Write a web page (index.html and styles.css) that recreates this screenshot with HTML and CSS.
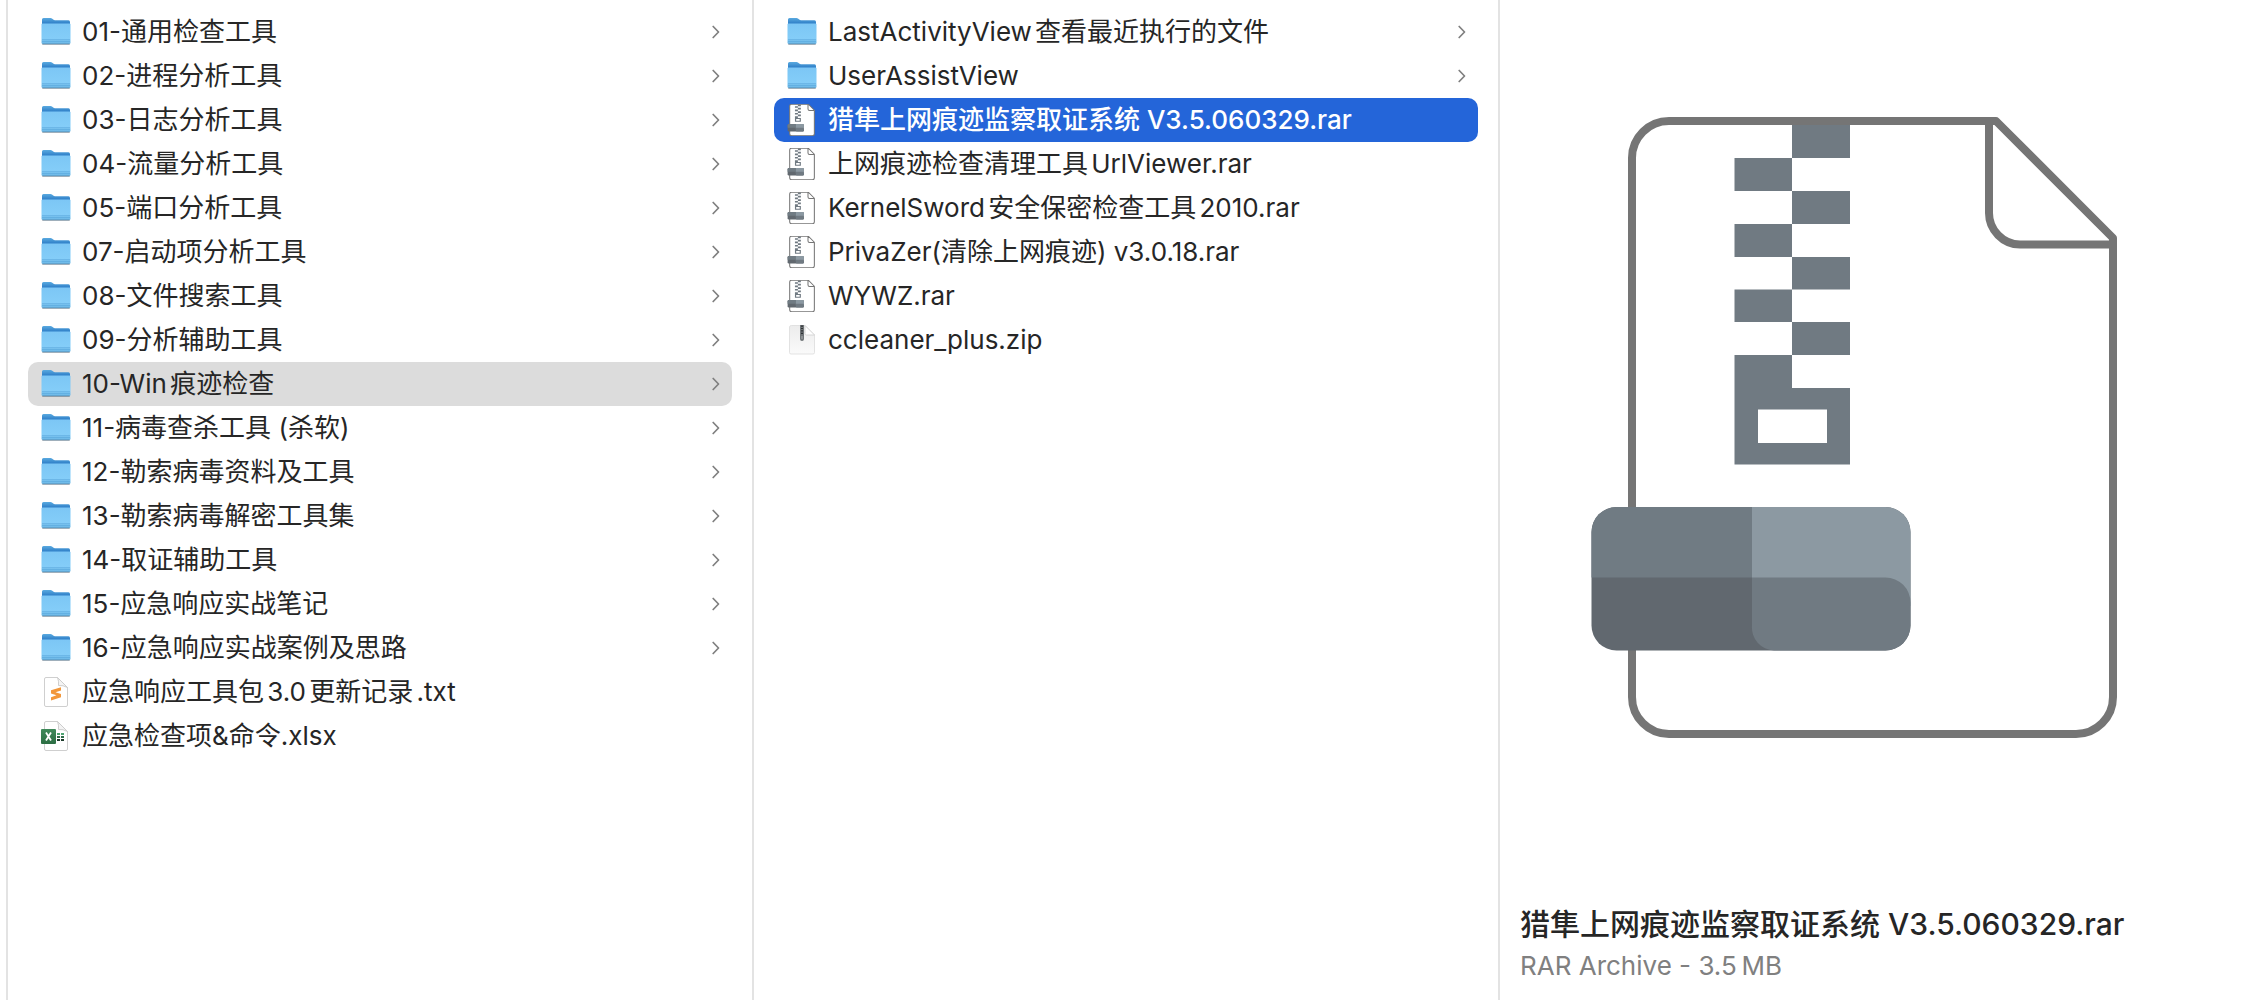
FILE: index.html
```html
<!DOCTYPE html>
<html lang="zh-CN">
<head>
  <meta charset="UTF-8">
  <title>应急响应工具包</title>
  <link rel="stylesheet" href="styles.css">
</head>
<body>

  <svg class="sprite" aria-hidden="true">
    <defs>
      <linearGradient id="folderBack" x1="0" y1="0" x2="0" y2="1">
        <stop offset="0" stop-color="#5aaae0"/>
        <stop offset="0.3" stop-color="#2f7fc8"/>
      </linearGradient>
      <linearGradient id="folderFront" x1="0" y1="0" x2="0" y2="1">
        <stop offset="0" stop-color="#7cc6f5"/>
        <stop offset="0.75" stop-color="#84cdf8"/>
        <stop offset="1" stop-color="#68b4e4"/>
      </linearGradient>
      <linearGradient id="zipPaper" x1="0" y1="0" x2="0" y2="1">
        <stop offset="0" stop-color="#ececec"/>
        <stop offset="1" stop-color="#fafafa"/>
      </linearGradient>
      <linearGradient id="excelGreen" x1="0" y1="0" x2="0" y2="1">
        <stop offset="0" stop-color="#3f8a5a"/>
        <stop offset="1" stop-color="#2c6e43"/>
      </linearGradient>
    </defs>

    <symbol id="folder" viewBox="0 0 32 32">
      <rect x="2" y="27" width="28" height="2" rx="1" fill="#000" opacity="0.25"/>
      <path d="M2 3.500Q2 2 3.500 2H10.500Q11.500 2 12.300 2.700L13.200 3.600Q14 4.300 15 4.300H28.500Q30 4.300 30 6V20H2Z" fill="url(#folderBack)"/>
      <path d="M1.500 8.500Q1.500 7.500 2.500 7.500H29.500Q30.500 7.500 30.500 8.500V26.500Q30.500 28 29 28H3Q1.500 28 1.500 26.500Z" fill="url(#folderFront)"/>
      <path d="M2 23.700H30M2 25.500H30" stroke="#5ca9dc" stroke-width="0.700"/>
      <path d="M2.500 27.900H29.500" stroke="#5a8fb5" stroke-width="0.800"/>
    </symbol>

    <symbol id="chevron" viewBox="0 0 8 14">
      <path d="M1.200 1.500L6.500 7L1.200 12.500" fill="none" stroke="#7f7f7f" stroke-width="1.700" stroke-linecap="round" stroke-linejoin="round"/>
    </symbol>

    <symbol id="rar" viewBox="0 0 624 624">
      <path d="M109 5H436L553 122V581Q553 618 516 618H109Q72 618 72 581V42Q72 5 109 5Z" fill="#fff"/>
      <path fill="#707a82" fill-rule="evenodd" d="M232 8H290V42H232ZM174.500 42H232V75H174.500ZM232 75H290V108H232ZM174.500 108H232V141H174.500ZM232 141H290V173.500H232ZM174.500 173.500H232V206H174.500ZM232 206H290V239H232ZM174.500 239H232V272H290V348.500H174.500ZM198 293.500V327H267V293.500Z"/>
      <path class="paper-edge" fill="none" stroke="#757575" stroke-linejoin="round" d="M109 5H436L553 122V581A37 37 0 0 1 516 618H109A37 37 0 0 1 72 581V42A37 37 0 0 1 109 5ZM429 5V97C429 114 443 128.500 460 128.500H553"/>
      <rect x="31.500" y="391" width="319" height="143.500" rx="25" fill="#61686f"/>
      <path d="M56.500 391H192V461.500H31.500V416A25 25 0 0 1 56.500 391Z" fill="#707b83"/>
      <path d="M192 391H325.500A25 25 0 0 1 350.500 416V490H192Z" fill="#8c99a2"/>
      <path d="M192 461.500H325.500A25 25 0 0 1 350.500 486.500V509.500A25 25 0 0 1 325.500 534.500H214A23 23 0 0 1 192 509.500Z" fill="#707a82"/>
    </symbol>

    <symbol id="zip" viewBox="0 0 32 32">
      <path d="M5.500 1.500H19L28.500 11V28.500Q28.500 30 27 30H5Q3.500 30 3.500 28.500V3Q3.500 1.500 5.500 1.500Z" fill="url(#zipPaper)" stroke="#dcdcdc" stroke-width="0.800"/>
      <path d="M19 1.500V9.500Q19 11 20.500 11H28.500Z" fill="#fff" stroke="#cfcfcf" stroke-width="0.800"/>
      <path d="M14 1H18V15Q18 17 16 17Q14 17 14 15Z" fill="#707578"/>
      <path d="M16 1.500V11" stroke="#2f3336" stroke-width="2" stroke-dasharray="1.200 1.200"/>
      <path d="M16 12V15" stroke="#a9adaf" stroke-width="1"/>
    </symbol>

    <symbol id="sublime" viewBox="0 0 32 32">
      <path d="M6 1.500H17.500L27.500 11.500V29Q27.500 30.500 26 30.500H6Q4.500 30.500 4.500 29V3Q4.500 1.500 6 1.500Z" fill="#fff" stroke="#c9c9c9" stroke-width="0.900"/>
      <path d="M17.500 1.500Q19 5 18.500 9.500Q23 9 27.500 11.500Z" fill="#f4f4f4" stroke="#c9c9c9" stroke-width="0.900"/>
      <path d="M11 14.300L21 11.300V14.500L15.500 16.300L21 18V21.300L11 24.500V21.200L16.500 19.300L11 17.600Z" fill="#f2973a"/>
    </symbol>

    <symbol id="excel" viewBox="0 0 32 32">
      <path d="M6 1.500H17.500L27.500 11.500V29Q27.500 30.500 26 30.500H6Q4.500 30.500 4.500 29V3Q4.500 1.500 6 1.500Z" fill="#fff" stroke="#c9c9c9" stroke-width="0.900"/>
      <path d="M17.500 1.500Q19 5 18.500 9.500Q23 9 27.500 11.500Z" fill="#f4f4f4" stroke="#c9c9c9" stroke-width="0.900"/>
      <path d="M17 13H20V15H17ZM21 13H24V15H21Z" fill="#4fa471"/>
      <path d="M17 16H20V18H17ZM21 16H24V18H21Z" fill="#2f6b48"/>
      <path d="M17 19H20V21H17ZM21 19H24V21H21Z" fill="#1d3b2b"/>
      <rect x="1" y="9" width="15" height="15" rx="1" fill="url(#excelGreen)"/>
      <path d="M6 12.500L11 20.500M11 12.500L6 20.500" stroke="#fff" stroke-width="1.800"/>
    </symbol>
  </svg>

  <main class="browser">

    <nav class="column" aria-label="应急响应工具包">
      <ul class="list">
        <li><a class="row" href="#"><svg class="icon"><use href="#folder"/></svg><span class="name">01-通用检查工具</span><svg class="chevron"><use href="#chevron"/></svg></a></li>
        <li><a class="row" href="#"><svg class="icon"><use href="#folder"/></svg><span class="name">02-进程分析工具</span><svg class="chevron"><use href="#chevron"/></svg></a></li>
        <li><a class="row" href="#"><svg class="icon"><use href="#folder"/></svg><span class="name">03-日志分析工具</span><svg class="chevron"><use href="#chevron"/></svg></a></li>
        <li><a class="row" href="#"><svg class="icon"><use href="#folder"/></svg><span class="name">04-流量分析工具</span><svg class="chevron"><use href="#chevron"/></svg></a></li>
        <li><a class="row" href="#"><svg class="icon"><use href="#folder"/></svg><span class="name">05-端口分析工具</span><svg class="chevron"><use href="#chevron"/></svg></a></li>
        <li><a class="row" href="#"><svg class="icon"><use href="#folder"/></svg><span class="name">07-启动项分析工具</span><svg class="chevron"><use href="#chevron"/></svg></a></li>
        <li><a class="row" href="#"><svg class="icon"><use href="#folder"/></svg><span class="name">08-文件搜索工具</span><svg class="chevron"><use href="#chevron"/></svg></a></li>
        <li><a class="row" href="#"><svg class="icon"><use href="#folder"/></svg><span class="name">09-分析辅助工具</span><svg class="chevron"><use href="#chevron"/></svg></a></li>
        <li><a class="row open" href="#"><svg class="icon"><use href="#folder"/></svg><span class="name">10-Win痕迹检查</span><svg class="chevron"><use href="#chevron"/></svg></a></li>
        <li><a class="row" href="#"><svg class="icon"><use href="#folder"/></svg><span class="name">11-病毒查杀工具 (杀软)</span><svg class="chevron"><use href="#chevron"/></svg></a></li>
        <li><a class="row" href="#"><svg class="icon"><use href="#folder"/></svg><span class="name">12-勒索病毒资料及工具</span><svg class="chevron"><use href="#chevron"/></svg></a></li>
        <li><a class="row" href="#"><svg class="icon"><use href="#folder"/></svg><span class="name">13-勒索病毒解密工具集</span><svg class="chevron"><use href="#chevron"/></svg></a></li>
        <li><a class="row" href="#"><svg class="icon"><use href="#folder"/></svg><span class="name">14-取证辅助工具</span><svg class="chevron"><use href="#chevron"/></svg></a></li>
        <li><a class="row" href="#"><svg class="icon"><use href="#folder"/></svg><span class="name">15-应急响应实战笔记</span><svg class="chevron"><use href="#chevron"/></svg></a></li>
        <li><a class="row" href="#"><svg class="icon"><use href="#folder"/></svg><span class="name">16-应急响应实战案例及思路</span><svg class="chevron"><use href="#chevron"/></svg></a></li>
        <li><a class="row" href="#"><svg class="icon"><use href="#sublime"/></svg><span class="name">应急响应工具包3.0更新记录.txt</span></a></li>
        <li><a class="row" href="#"><svg class="icon"><use href="#excel"/></svg><span class="name tight">应急检查项&amp;命令.xlsx</span></a></li>
      </ul>
    </nav>

    <nav class="column" aria-label="10-Win痕迹检查">
      <ul class="list">
        <li><a class="row" href="#"><svg class="icon"><use href="#folder"/></svg><span class="name">LastActivityView查看最近执行的文件</span><svg class="chevron"><use href="#chevron"/></svg></a></li>
        <li><a class="row" href="#"><svg class="icon"><use href="#folder"/></svg><span class="name">UserAssistView</span><svg class="chevron"><use href="#chevron"/></svg></a></li>
        <li><a class="row selected" href="#" aria-current="true"><svg class="icon"><use href="#rar"/></svg><span class="name">猎隼上网痕迹监察取证系统 V3.5.060329.rar</span></a></li>
        <li><a class="row" href="#"><svg class="icon"><use href="#rar"/></svg><span class="name">上网痕迹检查清理工具UrlViewer.rar</span></a></li>
        <li><a class="row" href="#"><svg class="icon"><use href="#rar"/></svg><span class="name">KernelSword安全保密检查工具2010.rar</span></a></li>
        <li><a class="row" href="#"><svg class="icon"><use href="#rar"/></svg><span class="name">PrivaZer(清除上网痕迹) v3.0.18.rar</span></a></li>
        <li><a class="row" href="#"><svg class="icon"><use href="#rar"/></svg><span class="name">WYWZ.rar</span></a></li>
        <li><a class="row" href="#"><svg class="icon"><use href="#zip"/></svg><span class="name">ccleaner_plus.zip</span></a></li>
      </ul>
    </nav>

    <section class="column preview">
      <div class="preview-art">
        <svg class="preview-icon" viewBox="0 0 624 624"><use href="#rar"/></svg>
      </div>
      <div class="preview-info">
        <h1>猎隼上网痕迹监察取证系统 V3.5.060329.rar</h1>
        <p>RAR Archive - 3.5&#8239;MB</p>
      </div>
    </section>

  </main>

</body>
</html>
```

FILE: styles.css
```css
* {
  box-sizing: border-box;
}

body {
  margin: 0;
  padding-left: 6px;
  background-color: #fff;
  color: #262626;
  font-family: Inter, "Noto Sans CJK SC", sans-serif;
  font-size: 26px;
  text-autospace: normal;
}

.sprite {
  position: absolute;
  width: 0;
  height: 0;
}

.browser {
  display: grid;
  grid-template-columns: repeat(3, 1fr);
  min-height: 100vh;
}

.column {
  min-width: 0;
  border-left: 2px solid #e3e3e3;
}

.list {
  list-style: none;
  margin: 0;
  padding: 10px 20px;
}

.row {
  display: flex;
  align-items: center;
  gap: 10px;
  height: 44px;
  padding: 0 12px;
  border-radius: 10px;
  color: inherit;
  text-decoration: none;
}

.row.open {
  background-color: #dcdcdc;
}

.row.selected {
  background-color: #2465d9;
  color: #fff;
  font-weight: 500;
}

.icon {
  flex: none;
  width: 32px;
  height: 32px;
  --edge: 20px;
}

.paper-edge {
  stroke-width: var(--edge, 8px);
}

.name {
  flex: 1;
  line-height: 40px;
  white-space: nowrap;
  overflow: hidden;
  text-overflow: ellipsis;
}

.name.tight {
  text-autospace: no-autospace;
}

.chevron {
  flex: none;
  width: 8px;
  height: 14px;
}

/* preview pane */
.preview {
  display: flex;
  flex-direction: column;
  justify-content: space-between;
}

.preview-art {
  padding: 116px 60px 0;
}

.preview-icon {
  display: block;
  width: 100%;
  --edge: 8px;
}

.preview-info {
  padding: 0 20px 14px;
}

.preview-info h1 {
  margin: 0;
  font-size: 30px;
  font-weight: 500;
  line-height: 44px;
}

.preview-info p {
  margin: 0;
  color: #808080;
  line-height: 40px;
}
```
